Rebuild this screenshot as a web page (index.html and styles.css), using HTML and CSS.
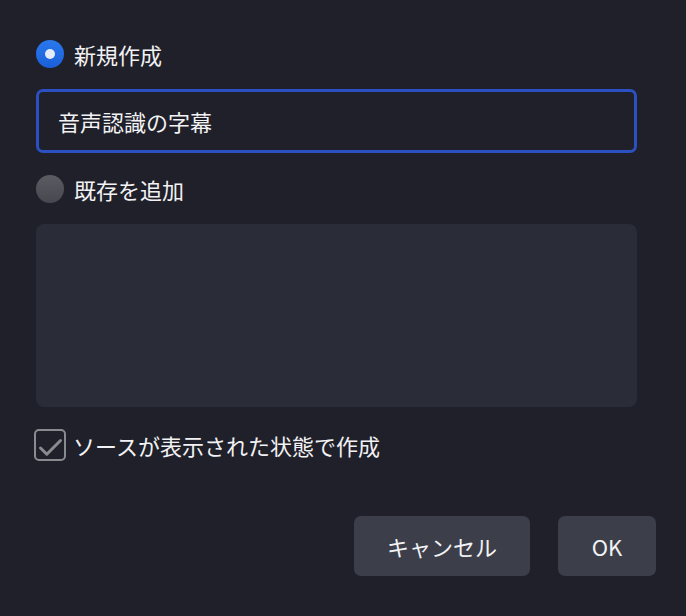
FILE: index.html
```html
<!DOCTYPE html>
<html lang="ja">
<head>
<meta charset="utf-8">
<link rel="stylesheet" href="styles.css">
</head>
<body>
<div class="dialog">
  <label class="option">
    <span class="radio radio-on"></span>
    <span class="label">新規作成</span>
  </label>
  <div class="input">音声認識の字幕</div>
  <label class="option option-second">
    <span class="radio radio-off"></span>
    <span class="label">既存を追加</span>
  </label>
  <div class="list"></div>
  <label class="check-row">
    <svg class="checkbox" width="32" height="32" viewBox="0 0 32 32">
      <rect x="1" y="1" width="30" height="30" rx="4" ry="4" fill="none" stroke="#8a8b90" stroke-width="2"/>
      <path d="M6.5 19 L12.8 25.2 L26.5 11.5" fill="none" stroke="#8a8b90" stroke-width="3" stroke-linecap="round" stroke-linejoin="round"/>
    </svg>
    <span class="label">ソースが表示された状態で作成</span>
  </label>
  <div class="buttons">
    <button class="btn btn-cancel">キャンセル</button>
    <button class="btn btn-ok">OK</button>
  </div>
</div>
</body>
</html>
```
FILE: styles.css
```css
html, body {
  margin: 0;
  padding: 0;
  background: #1f2029;
}
body {
  width: 686px;
  height: 616px;
  overflow: hidden;
  font-family: "Noto Sans CJK JP", "Noto Sans", sans-serif;
  color: #f2f2f4;
}
.dialog {
  display: flex;
  flex-direction: column;
  padding: 40px 49px 0 36px;
}
.option {
  display: flex;
  align-items: center;
  height: 28px;
  gap: 10px;
}
.option-second {
  margin-top: 22px;
}
.radio {
  width: 28px;
  height: 28px;
  border-radius: 50%;
  flex: none;
  position: relative;
  box-sizing: border-box;
}
.radio-on {
  background: linear-gradient(#2a78ee, #1a5fd8);
}
.radio-on::after {
  content: "";
  position: absolute;
  left: 9px;
  top: 9px;
  width: 10px;
  height: 10px;
  border-radius: 50%;
  background: #e3eaf8;
}
.radio-off {
  background: linear-gradient(#5a5b63, #47484f);
}
.label {
  font-size: 22px;
  line-height: 28px;
  font-weight: 400;
}
.input {
  margin-top: 21px;
  height: 64px;
  box-sizing: border-box;
  border: 3px solid #2b50c2;
  border-radius: 7px;
  padding: 0 19px;
  display: flex;
  align-items: center;
  font-size: 22px;
  font-weight: 400;
  background: #1f2029;
}
.list {
  margin-top: 21px;
  height: 183px;
  background: #2a2c37;
  border-radius: 8px;
}
.check-row {
  margin-top: 22px;
  margin-left: -2px;
  display: flex;
  align-items: center;
  gap: 7px;
  height: 32px;
}
.checkbox {
  flex: none;
  display: block;
}
.buttons {
  display: flex;
  justify-content: flex-end;
  gap: 28px;
  margin-top: 55px;
  margin-right: -19px;
}
.btn {
  height: 60px;
  border: none;
  border-radius: 7px;
  background: #3c3f4a;
  color: #f2f2f4;
  font-family: "Noto Sans CJK JP", "Noto Sans", sans-serif;
  font-size: 22px;
  font-weight: 400;
  padding: 0;
}
.btn-cancel {
  width: 176px;
}
.btn-ok {
  width: 98px;
}
```
